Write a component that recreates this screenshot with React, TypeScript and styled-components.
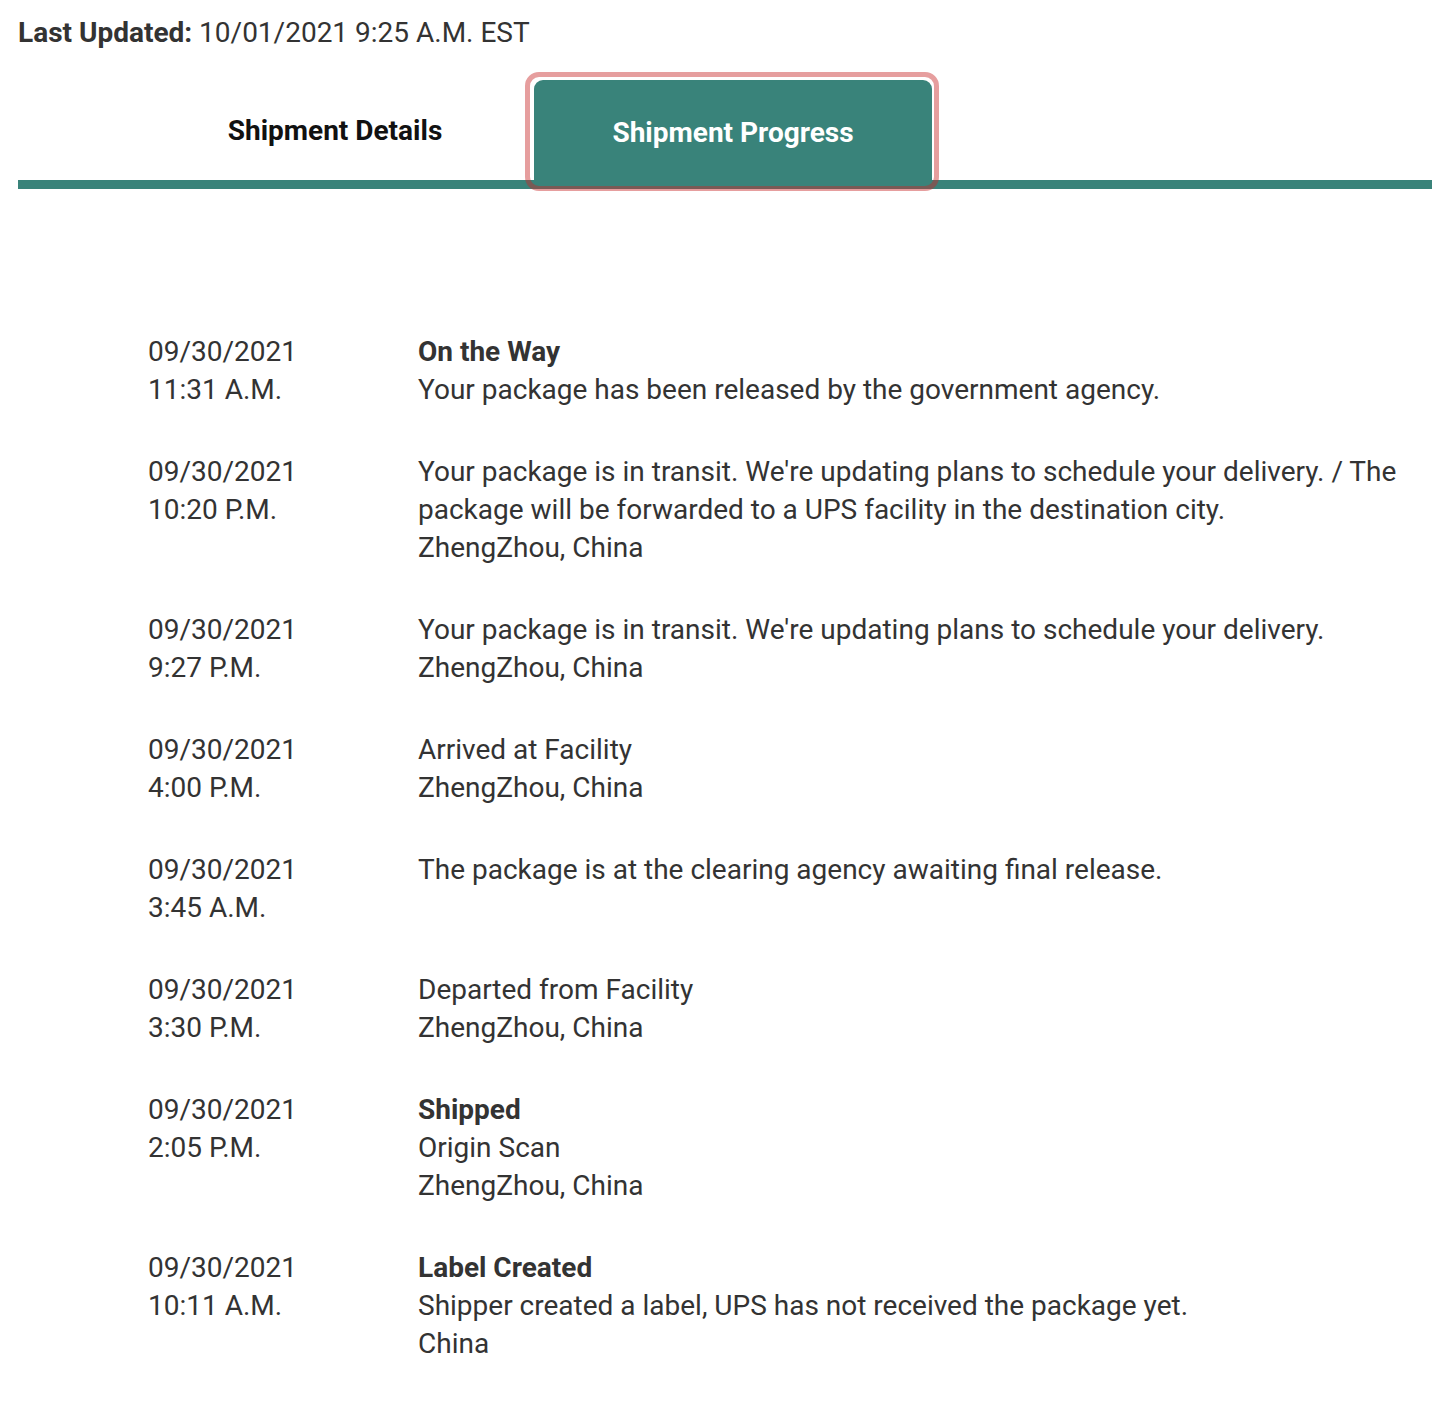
import React from 'react'
import styled, { createGlobalStyle } from 'styled-components'

const GlobalStyle = createGlobalStyle`
  body {
    margin: 0;
    background: #fff;
    font-family: Roboto, 'Liberation Sans', Arial, sans-serif;
    color: #333;
  }
`

const teal = '#39837a'

const Page = styled.div`
  padding: 14px 0 40px 18px;
`

const Updated = styled.div`
  font-size: 28px;
  line-height: 38px;
  color: #333;

  strong {
    font-weight: 700;
  }
`

const TabList = styled.div`
  display: flex;
  margin-top: 28px;
  padding-left: 118px;
  border-bottom: 9px solid ${teal};
`

const Tab = styled.button<{ $active?: boolean }>`
  position: relative;
  width: 398px;
  height: 100px;
  border: none;
  border-radius: 9px 9px 0 0;
  font-family: inherit;
  font-size: 28px;
  font-weight: 700;
  padding: 0;
  padding-top: ${(p) => (p.$active ? '4px' : '0')};
  background: ${(p) => (p.$active ? teal : 'transparent')};
  color: ${(p) => (p.$active ? '#fff' : '#111')};
  cursor: pointer;

  ${(p) =>
    p.$active &&
    `
    &::after {
      content: '';
      position: absolute;
      top: -8px;
      left: -9px;
      right: -7px;
      bottom: -11px;
      border: 5px solid rgba(200, 40, 40, 0.45);
      border-radius: 14px;
      pointer-events: none;
    }
  `}
`

const Timeline = styled.div`
  display: flex;
  flex-direction: column;
  gap: 44px;
  margin-top: 144px;
  padding: 0 20px 0 130px;
`

const Event = styled.div`
  display: grid;
  grid-template-columns: 270px 1fr;
  font-size: 28px;
  line-height: 38px;
  color: #333;
`

const When = styled.div`
  display: flex;
  flex-direction: column;
`

const What = styled.div`
  display: flex;
  flex-direction: column;
`

const Title = styled.span`
  font-weight: 700;
`

type Item = { date: string; time: string; title?: string; lines: string[] }

const events: Item[] = [
  { date: '09/30/2021', time: '11:31 A.M.', title: 'On the Way', lines: ['Your package has been released by the government agency.'] },
  {
    date: '09/30/2021',
    time: '10:20 P.M.',
    lines: [
      "Your package is in transit. We're updating plans to schedule your delivery. / The package will be forwarded to a UPS facility in the destination city.",
      'ZhengZhou, China',
    ],
  },
  { date: '09/30/2021', time: '9:27 P.M.', lines: ["Your package is in transit. We're updating plans to schedule your delivery.", 'ZhengZhou, China'] },
  { date: '09/30/2021', time: '4:00 P.M.', lines: ['Arrived at Facility', 'ZhengZhou, China'] },
  { date: '09/30/2021', time: '3:45 A.M.', lines: ['The package is at the clearing agency awaiting final release.'] },
  { date: '09/30/2021', time: '3:30 P.M.', lines: ['Departed from Facility', 'ZhengZhou, China'] },
  { date: '09/30/2021', time: '2:05 P.M.', title: 'Shipped', lines: ['Origin Scan', 'ZhengZhou, China'] },
  { date: '09/30/2021', time: '10:11 A.M.', title: 'Label Created', lines: ['Shipper created a label, UPS has not received the package yet.', 'China'] },
]

export default function App() {
  return (
    <Page>
      <GlobalStyle />
      <Updated>
        <strong>Last Updated:</strong> 10/01/2021 9:25 A.M. EST
      </Updated>
      <TabList>
        <Tab>Shipment Details</Tab>
        <Tab $active>Shipment Progress</Tab>
      </TabList>
      <Timeline>
        {events.map((e, i) => (
          <Event key={i}>
            <When>
              <span>{e.date}</span>
              <span>{e.time}</span>
            </When>
            <What>
              {e.title && <Title>{e.title}</Title>}
              {e.lines.map((l, j) => (
                <span key={j}>{l}</span>
              ))}
            </What>
          </Event>
        ))}
      </Timeline>
    </Page>
  )
}
